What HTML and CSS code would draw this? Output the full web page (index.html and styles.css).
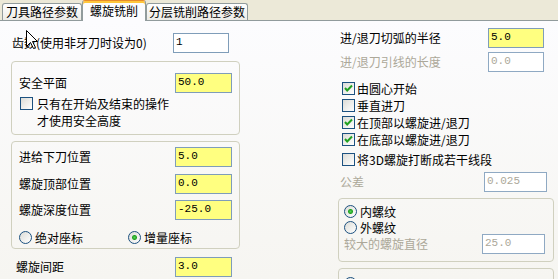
FILE: index.html
```html
<!DOCTYPE html>
<html lang="zh-CN">
<head>
    <meta charset="UTF-8">
    <link rel="stylesheet" href="styles.css">
    <title>螺旋铣削</title>
</head>
<body>

<div class="tabs">
    <div class="tab tab-tool">刀具路径参数</div>
    <div class="tab tab-helix active">螺旋铣削</div>
    <div class="tab tab-layer">分层铣削路径参数</div>
</div>

<div class="page">
    <div class="col left">
        <div class="row teeth">
            <span class="lbl">齿数(使用非牙刀时设为0)</span>
            <input class="field plain" value="1">
        </div>

        <div class="group safe">
            <div class="row">
                <span class="lbl">安全平面</span>
                <input class="field" value="50.0">
            </div>
            <label class="check multi">
                <span class="box"></span>
                <span>只有在开始及结束的操作<br>才使用安全高度</span>
            </label>
        </div>

        <div class="group feed">
            <div class="row">
                <span class="lbl">进给下刀位置</span>
                <input class="field" value="5.0">
            </div>
            <div class="row r2">
                <span class="lbl">螺旋顶部位置</span>
                <input class="field" value="0.0">
            </div>
            <div class="row r3">
                <span class="lbl">螺旋深度位置</span>
                <input class="field" value="-25.0">
            </div>
            <div class="radios">
                <label class="radio abs"><span class="dot"></span>绝对座标</label>
                <label class="radio on"><span class="dot"></span>增量座标</label>
            </div>
        </div>

        <div class="row pitch">
            <span class="lbl">螺旋间距</span>
            <input class="field" value="3.0">
        </div>
    </div>

    <div class="col right">
        <div class="row arc">
            <span class="lbl">进/退刀切弧的半径</span>
            <input class="field" value="5.0">
        </div>
        <div class="row lead">
            <span class="lbl off">进/退刀引线的长度</span>
            <input class="field plain off" value="0.0" disabled>
        </div>

        <div class="checks">
            <label class="check on"><span class="box"></span>由圆心开始</label>
            <label class="check"><span class="box"></span>垂直进刀</label>
            <label class="check on"><span class="box"></span>在顶部以螺旋进/退刀</label>
            <label class="check on"><span class="box"></span>在底部以螺旋进/退刀</label>
            <label class="check split"><span class="box"></span>将3D螺旋打断成若干线段</label>
        </div>

        <div class="row tol">
            <span class="lbl off">公差</span>
            <input class="field plain off wide" value="0.025" disabled>
        </div>

        <div class="group thread">
            <label class="radio on first"><span class="dot"></span>内螺纹</label>
            <label class="radio second"><span class="dot"></span>外螺纹</label>
            <div class="row dia">
                <span class="lbl off">较大的螺旋直径</span>
                <input class="field plain off wide" value="25.0" disabled>
            </div>
        </div>

        <div class="group extra">
            <label class="radio"><span class="dot"></span>&nbsp;</label>
        </div>
    </div>
</div>

<svg class="cursor" width="13" height="20" viewBox="0 0 13 20">
    <path d="M0.5 0.5 L0.5 16.5 L4.5 12.5 L7.5 18.5 L9.5 17.5 L6.5 11.5 L11.5 11.5 Z" fill="#fff" stroke="#000" stroke-width="1"/>
</svg>

</body>
</html>
```

FILE: styles.css
```css
body {
    margin: 0;
    height: 279px;
    overflow: hidden;
    position: relative;
    font-family: "Noto Sans CJK SC", sans-serif;
    font-size: 12px;
    color: #000;
    background: #ece9d8;
}

/* tab strip */
.tabs {
    display: flex;
    align-items: flex-end;
    height: 20px;
    padding-left: 2px;
    border-bottom: 1px solid #919b9c;
}

.tab {
    box-sizing: border-box;
    height: 17px;
    line-height: 16px;
    border: 1px solid #919b9c;
    border-bottom: none;
    border-radius: 3px 3px 0 0;
    background: linear-gradient(#ffffff, #ecebe6);
    text-align: center;
    white-space: nowrap;
}

.tab-tool { width: 80px; }
.tab-helix { width: 64px; }
.tab-layer { width: 102px; }

.tab.active {
    height: 21px;
    margin-bottom: -1px;
    line-height: 19px;
    border-top: 1px solid #e68b2c;
    box-shadow: inset 0 2px 0 #ffc73c;
    background: #fcfcfe;
}

/* page */
.page {
    display: flex;
    height: 258px;
    background: linear-gradient(#fcfcfe, #f6f5f1);
}

.col {
    display: flex;
    flex-direction: column;
    flex-shrink: 0;
}

.left {
    width: 229px;
    margin-left: 11px;
}

.right {
    width: 216px;
    margin-left: 98px;
}

.row {
    display: flex;
    align-items: center;
    height: 20px;
    flex-shrink: 0;
}

.lbl {
    white-space: nowrap;
    line-height: 20px;
}

.off {
    color: #aca899;
}

.field {
    box-sizing: border-box;
    width: 57px;
    height: 20px;
    margin: 0;
    padding: 0 0 2px 2px;
    border: 1px solid #7f9db9;
    background: #ffff80;
    font-family: "Liberation Mono", monospace;
    font-size: 11px;
    color: #000;
    outline: none;
}

.field.plain {
    background: #fff;
}

.field.off {
    color: #aca899;
    border-color: #8fa9c3;
}

.field.wide {
    width: 63px;
}

/* group boxes */
.group {
    flex-shrink: 0;
    border: 1px solid #d0d0bf;
    border-radius: 4px;
}

/* left column */
.teeth {
    margin-top: 12px;
}

.teeth .lbl {
    width: 161px;
    padding-left: 1px;
}

.teeth .field {
    width: 56px;
}

.safe {
    margin-top: 8px;
    padding: 11px 0 5px 7px;
}

.safe .lbl,
.feed .lbl {
    width: 156px;
}

.check {
    display: flex;
    align-items: center;
    height: 17px;
    line-height: 17px;
    white-space: nowrap;
}

.check.multi {
    align-items: flex-start;
    height: auto;
    margin-top: 2px;
}

.check.multi .box {
    margin-top: 2px;
    margin-left: 1px;
    margin-right: 4px;
}

.box {
    box-sizing: border-box;
    width: 13px;
    height: 13px;
    margin-right: 2px;
    flex-shrink: 0;
    border: 1px solid #1c5180;
    background: linear-gradient(135deg, #dcdcd7, #ffffff);
}

.check.on .box {
    background:
        url("data:image/svg+xml,%3Csvg xmlns='http://www.w3.org/2000/svg' width='11' height='11'%3E%3Cpath d='M2 5 L4.2 7.5 L9 2.5' fill='none' stroke='%2321a121' stroke-width='2'/%3E%3C/svg%3E") center no-repeat,
        linear-gradient(135deg, #dcdcd7, #ffffff);
}

.feed {
    margin-top: 6px;
    padding: 5px 0 2px 7px;
}

.feed .r2 { margin-top: 7px; }
.feed .r3 { margin-top: 6px; }

.radios {
    display: flex;
    align-items: center;
    height: 18px;
    margin-top: 8px;
}

.radio {
    display: flex;
    align-items: center;
    height: 17px;
    white-space: nowrap;
}

.radio.abs {
    width: 109px;
}

.dot {
    box-sizing: border-box;
    width: 13px;
    height: 13px;
    margin-right: 3px;
    flex-shrink: 0;
    border: 1px solid #1c5180;
    border-radius: 50%;
    background: linear-gradient(135deg, #dcdcd7, #ffffff);
}

.radio.on .dot {
    background:
        radial-gradient(circle, #55d355 0, #21a121 2px, transparent 3px),
        linear-gradient(135deg, #dcdcd7, #ffffff);
}

.pitch {
    margin-top: 8px;
}

.pitch .lbl {
    width: 159px;
    padding-left: 5px;
}

/* right column */
.arc {
    margin-top: 7px;
}

.lead {
    margin-top: 4px;
}

.arc .lbl,
.lead .lbl {
    width: 148px;
    padding-left: 2px;
}

.arc .field,
.lead .field {
    width: 56px;
}

.checks {
    display: flex;
    flex-direction: column;
    margin-top: 8px;
    padding-left: 4px;
}

.check.split {
    margin-top: 3px;
}

.tol {
    margin-top: 4px;
}

.tol .lbl {
    width: 144px;
    padding-left: 2px;
}

.thread {
    margin-top: 6px;
    padding: 4px 0 7px 5px;
}

.thread .first {
    height: 16px;
}

.thread .second {
    height: 13px;
    margin-top: 2px;
}

.thread .radio .dot {
    margin-right: 3px;
}

.dia .lbl {
    width: 138px;
}

.extra {
    margin-top: 6px;
    height: 40px;
    padding: 6px 0 0 5px;
}

.cursor {
    position: absolute;
    left: 26px;
    top: 30px;
}
```
